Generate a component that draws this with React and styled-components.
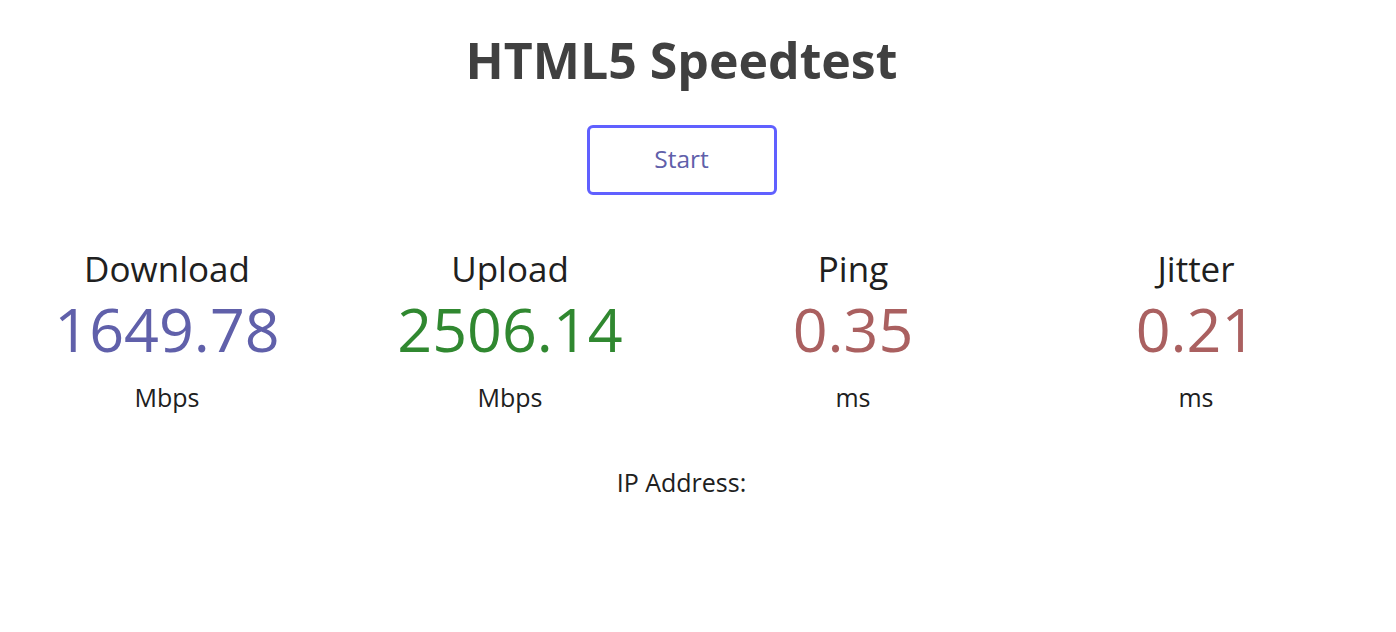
import React from 'react';
import styled, { createGlobalStyle } from 'styled-components';

const GlobalStyle = createGlobalStyle`
  html, body {
    margin: 0;
    padding: 0;
    background: #fff;
  }
  body {
    font-family: "Open Sans", "Noto Sans", sans-serif;
    color: #202020;
  }
`;

const Page = styled.main`
  width: calc(100% - 33px);
  display: flex;
  flex-direction: column;
  align-items: center;
  text-align: center;
`;

const Title = styled.h1`
  margin: 30px 0 0;
  font-size: 50px;
  line-height: 60px;
  font-weight: 700;
  color: #404040;
`;

const StartButton = styled.button`
  margin-top: 35px;
  box-sizing: border-box;
  width: 190px;
  height: 70px;
  padding: 0 0 2px;
  border: 3px solid #6060ff;
  border-radius: 6px;
  background: #fff;
  color: #6060aa;
  font-family: inherit;
  font-size: 24.5px;
  line-height: 60px;
  cursor: pointer;
`;

const StatsRow = styled.section`
  margin-top: 54px;
  display: grid;
  grid-template-columns: repeat(4, 300px);
  column-gap: 43px;
  justify-content: center;
`;

const Stat = styled.div`
  display: flex;
  flex-direction: column;
  align-items: center;
`;

const StatName = styled.div`
  font-size: 35px;
  line-height: 40px;
`;

const StatValue = styled.div`
  margin-top: 5px;
  font-size: 61px;
  line-height: 70px;
  color: ${props => props.color};
`;

const StatUnit = styled.div`
  margin-top: 17px;
  font-size: 25px;
  line-height: 32px;
`;

const IpLine = styled.div`
  margin-top: 53px;
  font-size: 25px;
  line-height: 32px;
`;

const stats = [
  { name: 'Download', value: '1649.78', unit: 'Mbps', color: '#6060aa' },
  { name: 'Upload', value: '2506.14', unit: 'Mbps', color: '#308830' },
  { name: 'Ping', value: '0.35', unit: 'ms', color: '#aa6060' },
  { name: 'Jitter', value: '0.21', unit: 'ms', color: '#aa6060' },
];

export default function App() {
  return (
    <>
      <GlobalStyle />
      <Page>
        <Title>HTML5 Speedtest</Title>
        <StartButton type="button">Start</StartButton>
        <StatsRow>
          {stats.map(s => (
            <Stat key={s.name}>
              <StatName>{s.name}</StatName>
              <StatValue color={s.color}>{s.value}</StatValue>
              <StatUnit>{s.unit}</StatUnit>
            </Stat>
          ))}
        </StatsRow>
        <IpLine>IP Address:</IpLine>
      </Page>
    </>
  );
}
